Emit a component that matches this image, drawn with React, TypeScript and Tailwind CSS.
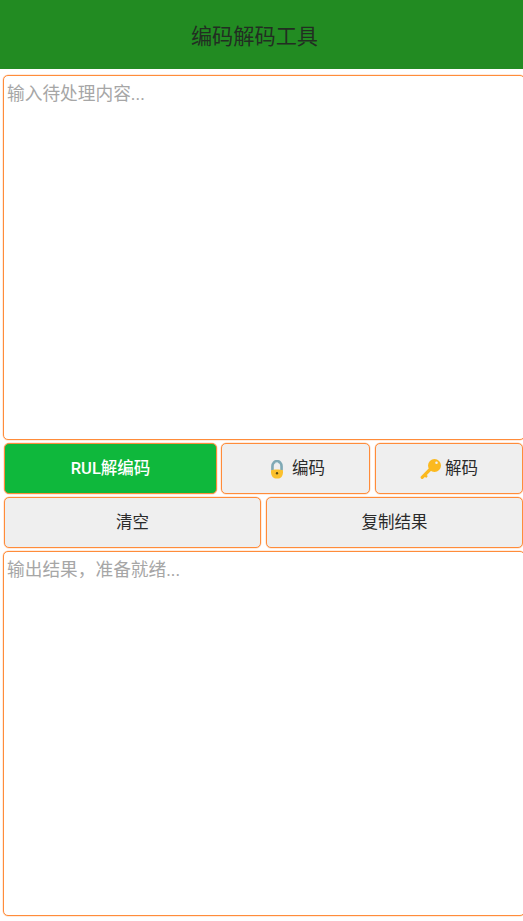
const font = { fontFamily: '"Roboto", "Noto Sans CJK SC", sans-serif' };

function LockIcon() {
  return (
    <svg width="14" height="19" viewBox="0 0 16 20" preserveAspectRatio="none" className="shrink-0">
      <path d="M2.800 11V6.500a5.200 5.200 0 0 1 10.400 0V11" fill="none" stroke="#7fa9b5" strokeWidth="3" />
      <path d="M6 3.200a3.400 3.400 0 0 1 4.500 1" fill="none" stroke="#cfe2e7" strokeWidth="1" />
      <path d="M1.200 10.800c2.500-1.200 10.800-1.200 13.600 0 .5 3.700-.5 7-3.600 8.300-1.900.5-4.200.5-6.200 0-3.200-1.300-4.300-4.600-3.800-8.300z" fill="#fbc02d" />
      <circle cx="8" cy="14" r="1.300" fill="#5b4a12" />
    </svg>
  );
}

function KeyIcon() {
  return (
    <svg width="22" height="22" viewBox="0 0 22 22" className="shrink-0">
      <path d="M11 10.500 2.200 19.300" fill="none" stroke="#fbb91f" strokeWidth="3.200" strokeLinecap="round" />
      <path d="M4.500 16.800 7 19" fill="none" stroke="#fbb91f" strokeWidth="2.400" />
      <path fillRule="evenodd" fill="#fbb91f" d="M14.500 1a6.500 6.500 0 1 1 0 13 6.500 6.500 0 0 1 0-13zm2 2.400a1.300 1.300 0 1 0 0 2.600 1.300 1.300 0 0 0 0-2.600z" />
    </svg>
  );
}

function Btn({ className, children }: { className: string; children: React.ReactNode }) {
  return (
    <button
      type="button"
      className={`flex items-center justify-center rounded-[5px] border border-[#ff8c3a] pt-px text-[16.5px] text-[#2a2a2a] shadow-[0_0_0_0.5px_rgba(255,140,58,0.35)] ${className}`}
    >
      {children}
    </button>
  );
}

export default function App() {
  return (
    <div className="h-[921px] w-[523px] overflow-hidden bg-white" style={font}>
      <header className="flex h-[69px] items-center justify-center bg-[#228b22] pt-[5px] pr-[14px] text-[21.2px] text-[#222e22]">
        编码解码工具
      </header>

      <main className="flex flex-col pt-[6px] pl-[3px]">
        <textarea
          placeholder="输入待处理内容..."
          className="h-[365px] w-[522px] resize-none appearance-none rounded-[5px] border border-[#ff8c3a] bg-white px-[3px] pt-[5px] pb-1 text-[17.7px] leading-[27px] shadow-[0_0_0_0.5px_rgba(255,140,58,0.35)] outline-none placeholder:text-[#a6a6a6]"
        />

        <div className="mt-[3px] flex h-[51px] gap-1 pl-px">
          <Btn className="w-[213px] bg-[#0fb83c] font-medium !text-white">RUL解编码</Btn>
          <Btn className="w-[149px] gap-[8px] bg-[#efefef] pl-[4px]">
            <LockIcon />
            编码
          </Btn>
          <Btn className="ml-px w-[148px] gap-[3px] bg-[#efefef]">
            <KeyIcon />
            解码
          </Btn>
        </div>

        <div className="mt-[3px] flex h-[51px] gap-[5px] pl-px">
          <Btn className="w-[257px] bg-[#efefef]">清空</Btn>
          <Btn className="w-[257px] bg-[#efefef]">复制结果</Btn>
        </div>

        <textarea
          placeholder="输出结果，准备就绪..."
          className="mt-[3px] h-[365px] w-[522px] resize-none appearance-none rounded-[5px] border border-[#ff8c3a] bg-white px-[3px] pt-[5px] pb-1 text-[17.7px] leading-[27px] shadow-[0_0_0_0.5px_rgba(255,140,58,0.35)] outline-none placeholder:text-[#a6a6a6]"
        />
      </main>
    </div>
  );
}
